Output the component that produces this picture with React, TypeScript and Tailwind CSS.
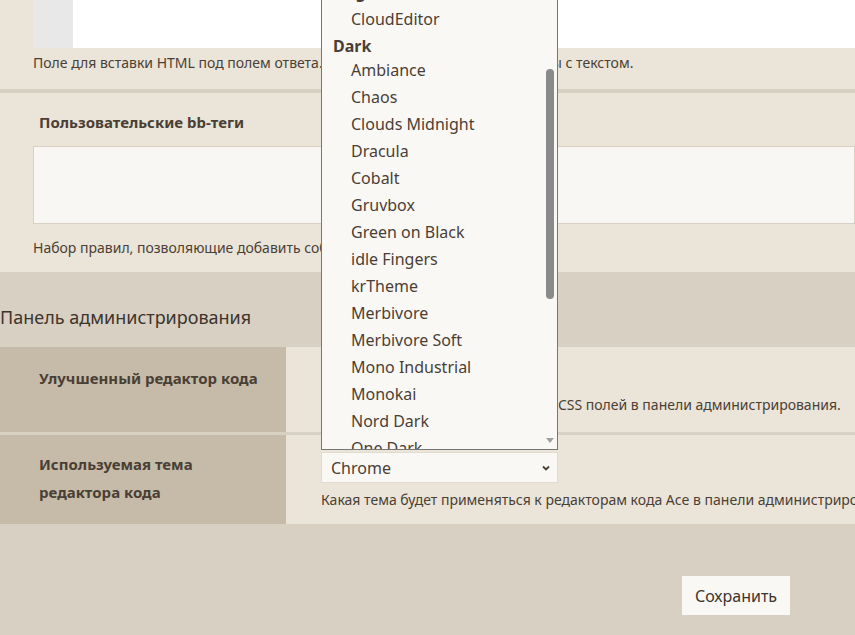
const themes = ['Ambiance', 'Chaos', 'Clouds Midnight', 'Dracula', 'Cobalt', 'Gruvbox', 'Green on Black', 'idle Fingers', 'krTheme', 'Merbivore', 'Merbivore Soft', 'Mono Industrial', 'Monokai', 'Nord Dark', 'One Dark']

function Dropdown() {
  return (
    <div className="absolute left-[321px] top-[-22px] w-[237px] h-[472px] bg-[#faf8f5] border border-[#767676] overflow-hidden z-20 text-[#4a3f35] text-[16px] font-['DejaVu_Sans',sans-serif]">
      <div className="relative h-full">
        <div className="h-[27px] pl-[11px] font-bold leading-[27px]">Bright</div>
        <div className="h-[27px] pl-[29px] leading-[27px]">CloudEditor</div>
        <div className="h-[24px] pl-[11px] font-bold leading-[27px]">Dark</div>
        {themes.map(t => (
          <div key={t} className="h-[27px] pl-[29px] leading-[27px] whitespace-nowrap">{t}</div>
        ))}
        <div className="absolute right-0 top-0 bottom-0 w-[14px] bg-[#faf8f5]">
          <div className="absolute left-[3px] top-[90px] w-[8px] h-[230px] rounded bg-[#8a8a8a]"></div>
          <div className="absolute left-[3px] bottom-[6px] w-0 h-0 border-l-4 border-r-4 border-t-[5px] border-l-transparent border-r-transparent border-t-[#a0a0a0]"></div>
        </div>
      </div>
    </div>
  )
}

export default function App() {
  return (
    <div className="relative w-[855px] h-[635px] overflow-hidden bg-[#d8d0c3] text-[#4a3f35] text-[14px] font-['Liberation_Sans',Arial,sans-serif]">
      <Dropdown />
      <div className="bg-[#ebe4d8] h-[89px] pl-[33px]">
        <div className="flex h-[48px]">
          <div className="w-[40px] bg-[#e8e8e8]"></div>
          <div className="flex-1 bg-white"></div>
        </div>
        <p className="mt-[4px] whitespace-nowrap">Поле для вставки HTML под полем ответа. Подключайте скрипты для работы с текстом.</p>
      </div>
      <div className="h-[4px] bg-[#d8d0c3]"></div>
      <div className="bg-[#ebe4d8] h-[179px] pl-[33px] pt-[18px]">
        <div className="pl-[6px] font-bold text-[15px]">Пользовательские bb-теги</div>
        <div className="mt-[12px] h-[78px] bg-[#f9f7f3] border border-[#d8d0c2]"></div>
        <p className="mt-[13px] whitespace-nowrap">Набор правил, позволяющие добавить собственные bb-теги в сообщение.</p>
      </div>
      <div className="h-[75px] flex items-end pb-[16px]">
        <h2 className="text-[18px] text-[#3d342c]">Панель администрирования</h2>
      </div>
      <div className="flex h-[85px]">
        <div className="w-[286px] shrink-0 bg-[#c5bba8] pl-[39px] pt-[20px] font-bold text-[15px]">Улучшенный редактор кода</div>
        <div className="flex-1 min-w-0 bg-[#ebe4d8] pl-[35px] pt-[47px] whitespace-nowrap overflow-hidden">Подсветка синтаксиса для HTML и CSS полей в панели администрирования.</div>
      </div>
      <div className="h-[3px] bg-[#d8d0c3]"></div>
      <div className="flex h-[89px]">
        <div className="w-[286px] shrink-0 bg-[#c5bba8] pl-[39px] pt-[15px] pr-[20px] font-bold text-[15px] leading-[28px]">Используемая тема редактора кода</div>
        <div className="flex-1 min-w-0 bg-[#ebe4d8] pl-[35px] pt-[17px] overflow-hidden">
          <div className="w-[237px] h-[31px] bg-[#faf8f5] border border-[#e2dbcf] flex items-center justify-between pl-[9px] pr-[6px] text-[16px] font-['DejaVu_Sans',sans-serif]">
            <span>Chrome</span>
            <svg width="10" height="10" viewBox="0 0 10 10"><path d="M2 3.5l3 3 3-3" stroke="#4a3f35" strokeWidth="1.8" fill="none" /></svg>
          </div>
          <p className="mt-[6px] whitespace-nowrap">Какая тема будет применяться к редакторам кода Ace в панели администрирования.</p>
        </div>
      </div>
      <div className="flex justify-end pr-[65px] pt-[52px]">
        <button className="w-[108px] h-[39px] bg-[#faf8f4] text-[16px] text-[#3d342c]">Сохранить</button>
      </div>
    </div>
  )
}
